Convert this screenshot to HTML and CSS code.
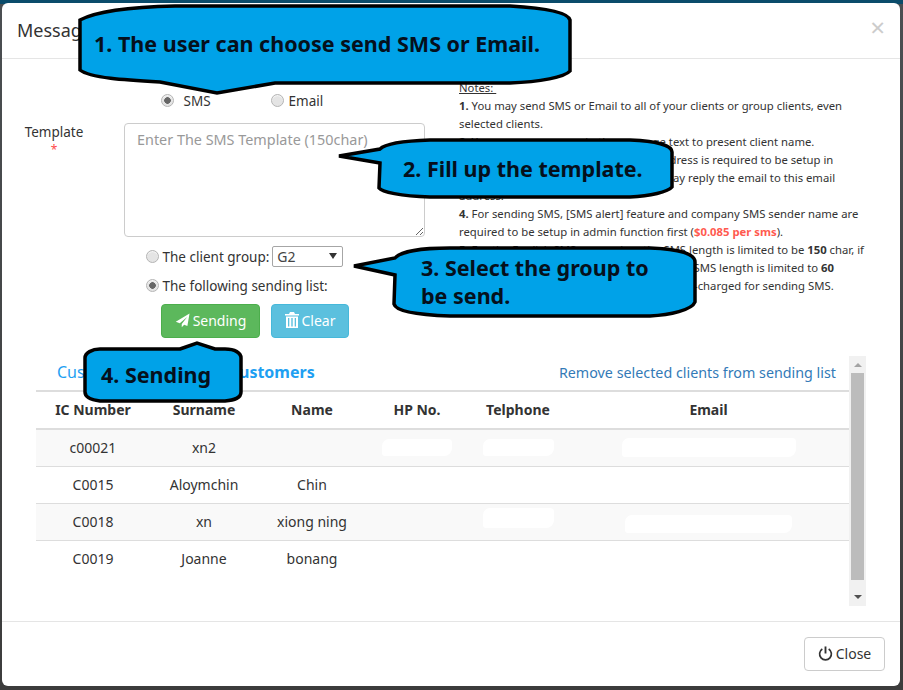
FILE: index.html
```html
<!DOCTYPE html>
<html>
<head>
    <title>Message</title>
    <link rel="stylesheet" href="styles.css">
</head>
<body>
    <div class="modal">
        <div class="modal-header">
            <h4>Message</h4>
            <span class="close-x">&times;</span>
        </div>
        <div class="modal-body">
            <div class="compose">
                <form class="compose-form">
                    <div class="channel-row">
                        <label class="channel"><input type="radio" name="channel" checked> SMS</label>
                        <label class="channel channel-email"><input type="radio" name="channel"> Email</label>
                    </div>
                    <div class="template-row">
                        <label class="template-label">Template<span class="required">*</span></label>
                        <textarea placeholder="Enter The SMS Template (150char)"></textarea>
                    </div>
                    <div class="target-row target-group">
                        <label><input type="radio" name="target"> The client group:</label>
                        <div class="select-wrap">
                            <select>
                                <option>G2</option>
                            </select>
                        </div>
                    </div>
                    <div class="target-row target-list">
                        <label><input type="radio" name="target" checked> The following sending list:</label>
                    </div>
                    <div class="button-group">
                        <button type="button" class="btn btn-send">
                            <svg width="15" height="15" viewBox="0 0 16 16"><path d="M15.5.5 .8 9.2l4.3 1.6L13 4.2 7.2 11.7v3.6l2.6-2.8 3.4 1.4z" fill="#fff"/></svg>
                            Sending
                        </button>
                        <button type="button" class="btn btn-clear">
                            <svg width="14" height="16" viewBox="0 0 14 16"><path d="M5 0h4l1 2h4v1.500H0V2h4zM1 4.500h12V16H1zM3 6v8.500h1.300V6zM6.300 6v8.500h1.400V6zM9.700 6v8.500H11V6z" fill="#fff" fill-rule="evenodd"/></svg>
                            Clear
                        </button>
                    </div>
                </form>
                <div class="notes">
                    <div class="notes-title">Notes:&nbsp;</div>
                    <div><b>1.</b> You may send SMS or Email to all of your clients or group clients, even<br>selected clients.</div>
                    <div><b>2.</b> You can use <b class="red">&lt;name&gt;</b> in the message text to present client name.</div>
                    <div><b>3.</b> For sending Email, company email address is required to be setup in<br>in the admin function first. The clients may reply the email to this email<br>address.</div>
                    <div><b>4.</b> For sending SMS, [SMS alert] feature and company SMS sender name are<br>required to be setup in admin function first (<b class="red">$0.085 per sms</b>).</div>
                    <div><b>5.</b> For the English SMS messaging, the SMS length is limited to be <b>150</b> char, if<br>other languages, like Chinese, are used, the SMS length is limited to <b>60</b><br>Please note that your account might be over-charged for sending SMS.</div>
                </div>
            </div>

            <div class="list-panel">
                <div class="list-main">
                    <div class="tabs">
                        <a class="tab">Customers</a>
                        <a class="tab tab-active">Sending Customers</a>
                        <a class="remove-link">Remove selected clients from sending list</a>
                    </div>
                    <table>
                        <thead>
                            <tr>
                                <th class="col-ic">IC Number</th>
                                <th class="col-name">Surname</th>
                                <th class="col-name">Name</th>
                                <th class="col-hp">HP No.</th>
                                <th class="col-tel">Telphone</th>
                                <th>Email</th>
                            </tr>
                        </thead>
                        <tbody>
                            <tr>
                                <td>c00021</td>
                                <td>xn2</td>
                                <td></td>
                                <td><span class="scribble hp"></span></td>
                                <td><span class="scribble tel"></span></td>
                                <td><span class="scribble mail"></span></td>
                            </tr>
                            <tr>
                                <td>C0015</td>
                                <td>Aloymchin</td>
                                <td>Chin</td>
                                <td></td>
                                <td></td>
                                <td></td>
                            </tr>
                            <tr>
                                <td>C0018</td>
                                <td>xn</td>
                                <td>xiong ning</td>
                                <td></td>
                                <td><span class="scribble tel tel-high"></span></td>
                                <td><span class="scribble mail mail-low"></span></td>
                            </tr>
                            <tr>
                                <td>C0019</td>
                                <td>Joanne</td>
                                <td>bonang</td>
                                <td></td>
                                <td></td>
                                <td></td>
                            </tr>
                        </tbody>
                    </table>
                </div>
                <div class="scrollbar">
                    <span class="arrow-up"></span>
                    <div class="thumb"></div>
                    <span class="arrow-down"></span>
                </div>
            </div>
        </div>
        <div class="modal-footer">
            <button type="button" class="btn btn-close">
                <svg width="15" height="15" viewBox="0 0 16 16"><path d="M4.600 3.200a6.300 6.300 0 1 0 6.800 0" fill="none" stroke="#333" stroke-width="1.800"/><path d="M8 .5v7.500" stroke="#333" stroke-width="2"/></svg>
                Close
            </button>
        </div>
    </div>

    <!-- Annotations drawn on top of the screenshot -->
    <svg class="annotations" width="903" height="690" viewBox="0 0 903 690">
        <path d="M80 20C95 12 130 7 175 6H510C545 8 568 12 570 20V71C565 77 540 82 510 83H275L217 93 160 82C125 80 90 78 80 70Z"/>
        <text x="94" y="52">1. The user can choose send SMS or Email.</text>

        <path d="M339 156 380 149C385 144 400 141 430 140H630C655 141 672 145 672 152V187C668 192 650 196 630 197H430C400 196 382 192 379 188L380 163Z"/>
        <text x="403" y="177">2. Fill up the template.</text>

        <path d="M354 266 395 258C400 252 420 248 450 248H650C680 249 695 254 695 262V302C692 310 670 315 650 316H450C420 315 396 312 394 304L395 275Z"/>
        <text x="421" y="276">3. Select the group to</text>
        <text x="421" y="304">be send.</text>

        <path d="M180 349 197 343 215 349H225C235 349 241 353 241 358V392C241 398 235 400 225 401H100C92 400 85 398 85 392V358C85 353 92 349 100 349Z"/>
        <text x="101" y="383">4. Sending</text>
    </svg>
</body>
</html>
```

FILE: styles.css
```css
* {
    box-sizing: border-box;
}
body {
    margin: 0;
    height: 690px;
    padding: 3px 3px 4px 2px;
    overflow: hidden;
    font-family: "Noto Sans", Arial, sans-serif;
    font-size: 14px;
    color: #333;
    background: linear-gradient(#0b4c6b 0, #0b4c6b 4px, #4b4f52 4px, #3c3c3c 100%);
}
.modal {
    height: 683px;
    display: flex;
    flex-direction: column;
    background-color: white;
    border-radius: 6px;
}
.modal-header {
    height: 56px;
    display: flex;
    align-items: center;
    justify-content: space-between;
    padding: 0 15px 2px;
    border-bottom: 1px solid #e5e5e5;
}
.modal-header h4 {
    margin: 0;
    font-size: 18px;
    font-weight: normal;
}
.close-x {
    font-size: 26px;
    line-height: 26px;
    color: #ccc;
    margin: -6px 0 0 0;
}
.modal-body {
    flex: 1;
}
.compose {
    display: flex;
    height: 297px;
    padding-top: 20px;
}
.compose-form {
    width: 457px;
    flex: none;
}
.notes {
    width: 404px;
    font-size: 11.300px;
    line-height: 18px;
    white-space: nowrap;
}
.notes-title {
    text-decoration: underline;
}
.red {
    color: #ff5a4f;
}
input[type="radio"] {
    appearance: none;
    width: 13px;
    height: 13px;
    margin: 0;
    border: 1px solid #b5b5b5;
    border-radius: 50%;
    background-color: #e4e4e4;
    box-shadow: inset 0 1px 1px rgba(255,255,255,0.7);
    vertical-align: -1px;
}
input[type="radio"]:checked {
    background: radial-gradient(circle, #666 0, #666 3px, #e4e4e4 3.6px);
}
.channel-row {
    display: flex;
    height: 20px;
    margin-top: 12px;
    padding-left: 159px;
    font-size: 13.500px;
    line-height: 20px;
}
.channel {
    width: 110px;
}
.channel input {
    margin-right: 6px;
}
.channel-email input {
    margin-right: 1px;
}
.template-row {
    display: flex;
    margin-top: 12px;
}
.template-label {
    width: 104px;
    padding-top: 1px;
    margin-right: 18px;
    text-align: center;
    font-size: 13.500px;
    line-height: 17px;
}
.required {
    display: block;
    font-size: 12px;
    color: #ff4a4a;
}
textarea {
    width: 301px;
    height: 114px;
    padding: 6px 12px;
    border: 1px solid #ccc;
    border-radius: 4px;
    font-family: inherit;
    font-size: 14.400px;
    line-height: 20px;
}
textarea::placeholder {
    color: #999;
}
.target-row {
    display: flex;
    align-items: center;
    gap: 3px;
    padding-left: 144px;
    padding-top: 1px;
    font-size: 13.500px;
}
.target-row input {
    margin-right: 0;
}
.target-group {
    height: 21px;
    margin-top: 9px;
}
.target-list {
    height: 18px;
    margin-top: 9px;
}
.select-wrap {
    position: relative;
    width: 71px;
    margin-top: -1px;
}
.select-wrap::after {
    content: "";
    position: absolute;
    top: 7px;
    right: 6px;
    border-left: 4px solid transparent;
    border-right: 4px solid transparent;
    border-top: 6px solid #333;
}
select {
    appearance: none;
    display: block;
    width: 100%;
    height: 21px;
    padding: 0 4px;
    border: 1px solid #a6a6a6;
    border-radius: 2px;
    background-color: white;
    font-family: inherit;
    font-size: 14px;
    color: #444;
}
.button-group {
    display: flex;
    gap: 11px;
    margin-top: 10px;
    padding-left: 159px;
}
.btn {
    height: 34px;
    display: flex;
    align-items: center;
    justify-content: center;
    gap: 3px;
    padding: 0 0 2px;
    border: 1px solid transparent;
    border-radius: 4px;
    font-family: inherit;
    font-size: 14px;
    cursor: pointer;
}
.btn-send {
    width: 99px;
    background-color: #5cb85c;
    border-color: #4cae4c;
    color: white;
}
.btn-clear {
    width: 78px;
    background-color: #5bc0de;
    border-color: #46b8da;
    color: white;
}
.list-panel {
    display: flex;
    height: 250px;
    margin-left: 34px;
    width: 830px;
}
.list-main {
    width: 813px;
}
.tabs {
    display: flex;
    align-items: center;
    height: 34px;
    padding: 0 13px 2px 21px;
    font-size: 16px;
    color: #1e9ff2;
}
.tab {
    margin-right: 22px;
}
.tab-active {
    font-weight: bold;
}
.remove-link {
    margin-left: auto;
    font-size: 14.300px;
    color: #337ab7;
}
table {
    width: 813px;
    table-layout: fixed;
    border-collapse: collapse;
    border-top: 2px solid #ddd;
}
th {
    height: 38px;
    padding: 0 0 1px;
    border-bottom: 2px solid #ddd;
    text-align: center;
    font-weight: bold;
}
td {
    height: 37px;
    padding: 0;
    border-bottom: 1px solid #ddd;
    text-align: center;
}
tbody tr:last-child td {
    border-bottom: none;
}
tbody tr:nth-child(odd) {
    background-color: #f9f9f9;
}
.col-ic {
    width: 114px;
}
.col-name {
    width: 108px;
}
.col-hp {
    width: 102px;
}
.col-tel {
    width: 100px;
}
.scribble {
    display: inline-block;
    height: 17px;
    margin-bottom: 2px;
    border-radius: 7px 4px 8px 3px;
    background-color: white;
    vertical-align: middle;
}
.scribble.hp {
    width: 70px;
}
.scribble.tel {
    width: 71px;
}
.scribble.mail {
    width: 174px;
    height: 19px;
}
.scribble.tel-high {
    height: 20px;
    margin-bottom: 8px;
}
.scribble.mail-low {
    width: 167px;
    height: 18px;
    margin: 4px 0 0;
}
.scrollbar {
    width: 17px;
    display: flex;
    flex-direction: column;
    align-items: center;
    background-color: #f1f1f1;
}
.arrow-up, .arrow-down {
    width: 0;
    height: 0;
    border-left: 4px solid transparent;
    border-right: 4px solid transparent;
}
.arrow-up {
    margin: 7px 0 6px;
    border-bottom: 4px solid #a3a3a3;
}
.thumb {
    width: 13px;
    height: 207px;
    background-color: #bcbcbc;
}
.arrow-down {
    margin-top: 15px;
    border-top: 4px solid #505050;
}
.modal-footer {
    display: flex;
    justify-content: flex-end;
    height: 65px;
    padding: 15px 15px 0 0;
    border-top: 1px solid #e5e5e5;
}
.btn-close {
    width: 81px;
    background-color: white;
    border-color: #ccc;
    color: #333;
}
.annotations {
    position: absolute;
    top: 0;
    left: 0;
}
.annotations path {
    fill: #00a2e8;
    stroke: black;
    stroke-width: 3.500;
}
.annotations text {
    font-family: "Noto Sans", Arial, sans-serif;
    font-size: 21.500px;
    font-weight: bold;
    fill: #05101c;
}
```
